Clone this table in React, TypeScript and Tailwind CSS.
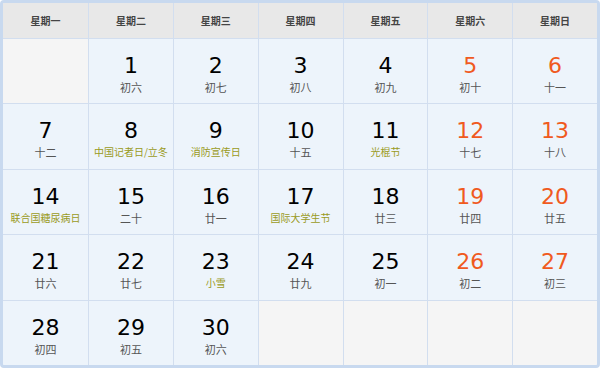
import React from "react";

type Day = { d: number; sub: string; fest?: boolean } | null;

const weekdays = ["星期一", "星期二", "星期三", "星期四", "星期五", "星期六", "星期日"];

const days: Day[] = [
  null,
  { d: 1, sub: "初六" },
  { d: 2, sub: "初七" },
  { d: 3, sub: "初八" },
  { d: 4, sub: "初九" },
  { d: 5, sub: "初十" },
  { d: 6, sub: "十一" },
  { d: 7, sub: "十二" },
  { d: 8, sub: "中国记者日/立冬", fest: true },
  { d: 9, sub: "消防宣传日", fest: true },
  { d: 10, sub: "十五" },
  { d: 11, sub: "光棍节", fest: true },
  { d: 12, sub: "十七" },
  { d: 13, sub: "十八" },
  { d: 14, sub: "联合国糖尿病日", fest: true },
  { d: 15, sub: "二十" },
  { d: 16, sub: "廿一" },
  { d: 17, sub: "国际大学生节", fest: true },
  { d: 18, sub: "廿三" },
  { d: 19, sub: "廿四" },
  { d: 20, sub: "廿五" },
  { d: 21, sub: "廿六" },
  { d: 22, sub: "廿七" },
  { d: 23, sub: "小雪", fest: true },
  { d: 24, sub: "廿九" },
  { d: 25, sub: "初一" },
  { d: 26, sub: "初二" },
  { d: 27, sub: "初三" },
  { d: 28, sub: "初四" },
  { d: 29, sub: "初五" },
  { d: 30, sub: "初六" },
  null,
  null,
  null,
  null,
];

export default function App() {
  return (
    <div className="w-[600px] h-[368px] bg-white">
      <div className="h-full border-[3px] border-[#c8d9ef] rounded-[4px] overflow-hidden">
        <div className="grid grid-cols-[85px_repeat(6,1fr)] grid-rows-[35px_repeat(5,1fr)] gap-px bg-[#d2deef] h-full">
          {/* Header */}
          {weekdays.map((w) => (
            <div
              key={w}
              className="bg-[#e8e8e8] flex items-center justify-center text-[10px] font-bold text-[#444] font-['Noto_Sans_CJK_SC',sans-serif]"
            >
              {w}
            </div>
          ))}

          {/* Days */}
          {days.map((day, i) => {
            if (!day) return <div key={i} className="bg-[#f5f5f5]" />;
            const weekend = i % 7 >= 5;
            return (
              <div key={i} className="bg-[#edf4fb] flex flex-col items-center pt-[14px]">
                <div
                  className={`text-[22px] leading-[26px] font-['DejaVu_Sans',sans-serif] ${
                    weekend ? "text-[#f05a1e]" : "text-black"
                  }`}
                >
                  {day.d}
                </div>
                <div
                  className={`leading-[16px] font-['Noto_Sans_CJK_SC',sans-serif] ${
                    day.fest ? "text-[10px] text-[#9a9a1c]" : "text-[11px] text-[#555]"
                  }`}
                >
                  {day.sub}
                </div>
              </div>
            );
          })}
        </div>
      </div>
    </div>
  );
}
